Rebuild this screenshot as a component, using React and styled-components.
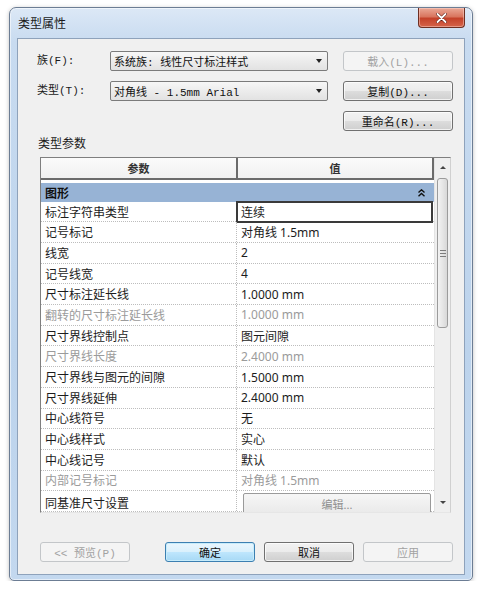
import React from 'react';
import styled, { createGlobalStyle, css } from 'styled-components';

const GlobalStyle = createGlobalStyle`
  html, body { margin: 0; padding: 0; background: #ffffff; }
  body { font-family: "Noto Sans", "Noto Sans CJK SC", sans-serif; }
  * { box-sizing: border-box; }
`;

const simFont = `"Liberation Mono", "Noto Sans CJK SC", monospace`;
const uiFont = `"Noto Sans", "Noto Sans CJK SC", sans-serif`;

const Page = styled.div`
  padding: 7px 0 0 9px;
`;

const Window = styled.div`
  width: 464px;
  height: 574px;
  border: 1px solid #6c7d94;
  border-radius: 7px 7px 5px 5px;
  background: linear-gradient(180deg, #dce8f6 0px, #c8dbf0 34px, #bcd3ec 60%, #c3d8ef 100%);
  box-shadow: inset 0 0 0 1px rgba(255, 255, 255, 0.55), 0 1px 4px rgba(0, 0, 0, 0.25);
  padding: 0 7px 5px 7px;
  display: flex;
  flex-direction: column;
`;

const TitleBar = styled.div`
  height: 30px;
  display: flex;
  align-items: flex-start;
  justify-content: space-between;
`;

const Title = styled.div`
  font-family: "Noto Sans CJK SC", sans-serif;
  font-size: 12px;
  color: #1a1a1a;
  line-height: 30px;
  height: 30px;
  padding-left: 1px;
`;

const CloseButton = styled.div`
  width: 47px;
  height: 20px;
  border: 1px solid #6e2f22;
  border-top: none;
  border-radius: 0 0 4px 4px;
  background: linear-gradient(180deg, #eaa896 0%, #d9765f 45%, #c4422a 55%, #d5644a 100%);
  box-shadow: inset 0 0 0 1px rgba(255, 220, 210, 0.45);
  display: flex;
  align-items: center;
  justify-content: center;
`;

const Client = styled.div`
  flex: 1;
  border: 1px solid #8ea2bb;
  background: #f0f0f0;
  display: flex;
  flex-direction: column;
  padding: 12px 11px 0 0;
`;

const TopGrid = styled.div`
  display: grid;
  grid-template-columns: 73px 218px 1fr;
  row-gap: 10px;
  grid-auto-rows: 20px;
  padding-left: 19px;
`;

const FieldLabel = styled.div`
  font-family: ${simFont};
  font-size: 11px;
  color: #1a1a1a;
  line-height: 20px;
`;

const Combo = styled.div`
  border: 1px solid #7b7b7b;
  border-radius: 2px;
  background: linear-gradient(180deg, #f7f7f7 0%, #ececec 50%, #e2e2e2 100%);
  display: flex;
  align-items: center;
  justify-content: space-between;
  padding: 0 5px 0 3px;
  font-family: ${simFont};
  font-size: 11px;
  color: #111;
`;

const ComboArrow = styled.span`
  width: 0;
  height: 0;
  border-left: 3px solid transparent;
  border-right: 3px solid transparent;
  border-top: 4px solid #222;
`;

const buttonBase = css`
  height: 20px;
  border-radius: 3px;
  font-family: ${simFont};
  font-size: 11px;
  display: flex;
  align-items: center;
  justify-content: center;
`;

const DialogButton = styled.div`
  ${buttonBase};
  width: ${(p) => (p.$wide ? '110px' : '90px')};
  ${(p) =>
    p.$disabled
      ? css`
          border: 1px solid #c3c6c9;
          background: #f4f4f4;
          color: #a2a2a2;
        `
      : p.$default
      ? css`
          border: 1px solid #3c7fb1;
          background: linear-gradient(180deg, #eaf6fd 0%, #d9f0fc 50%, #bee6fd 51%, #a7d9f5 100%);
          box-shadow: inset 0 0 0 1px #c7ecfb;
          color: #111;
        `
      : css`
          border: 1px solid #707070;
          background: linear-gradient(180deg, #f2f2f2 0%, #ebebeb 50%, #dddddd 51%, #cfcfcf 100%);
          box-shadow: inset 0 0 0 1px rgba(255, 255, 255, 0.7);
          color: #111;
        `}
  ${(p) => p.$wide && `justify-self: end;`}
  ${(p) => p.$col && `grid-column: ${p.$col};`}
`;

const SectionLabel = styled.div`
  font-family: "Noto Sans CJK SC", sans-serif;
  font-size: 12px;
  color: #1a1a1a;
  line-height: 14px;
  margin: 5px 0 0 20px;
`;

const PropertyTable = styled.div`
  margin: 7px 0 0 22px;
  width: 411px;
  height: 356px;
  border: 1px solid #7f7f7f;
  border-right-color: #d0d0d0;
  border-bottom-color: #e6e6e6;
  background: #ffffff;
  display: grid;
  grid-template-columns: 393px 16px;
  overflow: hidden;
`;

const TableBody = styled.div`
  display: flex;
  flex-direction: column;
  overflow: hidden;
`;

const HeaderRow = styled.div`
  display: grid;
  grid-template-columns: 195px 1fr;
  height: 25px;
  background: linear-gradient(180deg, #fbfbfb 0%, #f1f1f1 100%);
  border-bottom: 2px solid #6b6b6b;
  border-right: 2px solid #6b6b6b;
`;

const HeaderCell = styled.div`
  display: flex;
  align-items: center;
  justify-content: center;
  font-family: ${uiFont};
  font-size: 11px;
  font-weight: 700;
  color: #333;
  ${(p) => p.$divider && `border-left: 2px solid #6b6b6b;`}
`;

const Spacer = styled.div`
  height: 4px;
  background: #ffffff;
`;

const GroupRow = styled.div`
  height: 21px;
  background: #97b3d5;
  display: flex;
  align-items: center;
  justify-content: space-between;
  padding: 0 9px 0 4px;
  font-family: ${uiFont};
  font-size: 12px;
  font-weight: 700;
  color: #111;
`;

const PropRow = styled.div`
  display: grid;
  grid-template-columns: 195px 1fr;
  height: 20.7px;
  flex-shrink: 0;
  border-bottom: 1px dotted #bdbdbd;
`;

const PropCell = styled.div`
  display: flex;
  align-items: center;
  padding-left: 4px;
  font-family: ${uiFont};
  font-size: 12px;
  white-space: nowrap;
  color: ${(p) => (p.$muted ? '#9b9b9b' : '#1c1c1c')};
  ${(p) => p.$value && `border-left: 1px dotted #bdbdbd;`}
  ${(p) =>
    p.$selected &&
    css`
      border: 2px solid #3a3a3a;
      margin: -1px 1px -1px 0;
      padding-left: 3px;
    `}
`;

const EditButton = styled.div`
  flex: 1;
  margin: 2px 3px 0 2px;
  height: 22px;
  border: 1px solid #9a9a9a;
  border-radius: 2px;
  background: linear-gradient(180deg, #f6f6f6 0%, #e9e9e9 100%);
  display: flex;
  align-items: center;
  justify-content: center;
  font-family: ${uiFont};
  font-size: 11px;
  color: #8f8f8f;
`;

const ScrollBar = styled.div`
  display: flex;
  flex-direction: column;
  background: #efefef;
  border-left: 1px solid #e4e4e4;
`;

const ScrollArrow = styled.div`
  height: 19px;
  display: flex;
  align-items: center;
  justify-content: center;
  flex-shrink: 0;
`;

const ArrowGlyph = styled.span`
  width: 0;
  height: 0;
  border-left: 3px solid transparent;
  border-right: 3px solid transparent;
  ${(p) => (p.$up ? 'border-bottom: 3px solid #444;' : 'border-top: 3px solid #444;')}
`;

const Thumb = styled.div`
  margin: 1px 2px 0 2px;
  height: 150px;
  flex-shrink: 0;
  border: 1px solid #9b9b9b;
  border-radius: 3px;
  background: linear-gradient(90deg, #f3f3f3 0%, #e6e6e6 50%, #d8d8d8 100%);
  display: flex;
  flex-direction: column;
  align-items: center;
  justify-content: center;
  gap: 2px;
`;

const Grip = styled.span`
  width: 6px;
  height: 1px;
  background: #7d7d7d;
`;

const Track = styled.div`
  flex: 1;
`;

const ButtonBar = styled.div`
  margin: 29px 0 0 22px;
  display: flex;
  justify-content: space-between;
`;

const ButtonGroup = styled.div`
  display: flex;
  gap: 9px;
`;

const CollapseIcon = () => (
  <svg width="7" height="8" viewBox="0 0 7 8">
    <path d="M0.5 3.5 L3.5 0.8 L6.5 3.5 M0.5 7.2 L3.5 4.5 L6.5 7.2" fill="none" stroke="#111" strokeWidth="1.4" />
  </svg>
);

const CloseGlyph = () => (
  <svg width="11" height="10" viewBox="0 0 11 10">
    <path d="M1.5 1 L9.5 9 M9.5 1 L1.5 9" stroke="#5a1a10" strokeWidth="3" strokeLinecap="round" />
    <path d="M1.5 1 L9.5 9 M9.5 1 L1.5 9" stroke="#ffffff" strokeWidth="1.8" strokeLinecap="round" />
  </svg>
);

const rows = [
  { p: '标注字符串类型', v: '连续', selected: true },
  { p: '记号标记', v: '对角线 1.5mm' },
  { p: '线宽', v: '2' },
  { p: '记号线宽', v: '4' },
  { p: '尺寸标注延长线', v: '1.0000 mm' },
  { p: '翻转的尺寸标注延长线', v: '1.0000 mm', muted: true },
  { p: '尺寸界线控制点', v: '图元间隙' },
  { p: '尺寸界线长度', v: '2.4000 mm', muted: true },
  { p: '尺寸界线与图元的间隙', v: '1.5000 mm' },
  { p: '尺寸界线延伸', v: '2.4000 mm' },
  { p: '中心线符号', v: '无' },
  { p: '中心线样式', v: '实心' },
  { p: '中心线记号', v: '默认' },
  { p: '内部记号标记', v: '对角线 1.5mm', muted: true },
  { p: '同基准尺寸设置', edit: true },
];

export default function App() {
  return (
    <>
      <GlobalStyle />
      <Page>
        <Window>
          <TitleBar>
            <Title>类型属性</Title>
            <CloseButton>
              <CloseGlyph />
            </CloseButton>
          </TitleBar>
          <Client>
            <TopGrid>
              <FieldLabel>族(F):</FieldLabel>
              <Combo>
                <span>系统族: 线性尺寸标注样式</span>
                <ComboArrow />
              </Combo>
              <DialogButton $wide $disabled>载入(L)...</DialogButton>

              <FieldLabel>类型(T):</FieldLabel>
              <Combo>
                <span>对角线 - 1.5mm Arial</span>
                <ComboArrow />
              </Combo>
              <DialogButton $wide>复制(D)...</DialogButton>

              <DialogButton $wide $col={3}>重命名(R)...</DialogButton>
            </TopGrid>

            <SectionLabel>类型参数</SectionLabel>

            <PropertyTable>
              <TableBody>
                <HeaderRow>
                  <HeaderCell>参数</HeaderCell>
                  <HeaderCell $divider>值</HeaderCell>
                </HeaderRow>
                <Spacer />
                <GroupRow>
                  <span>图形</span>
                  <CollapseIcon />
                </GroupRow>
                {rows.map((r) => (
                  <PropRow key={r.p}>
                    <PropCell $muted={r.muted}>{r.p}</PropCell>
                    {r.edit ? (
                      <PropCell $value>
                        <EditButton>编辑...</EditButton>
                      </PropCell>
                    ) : (
                      <PropCell $value $muted={r.muted} $selected={r.selected}>
                        {r.v}
                      </PropCell>
                    )}
                  </PropRow>
                ))}
              </TableBody>
              <ScrollBar>
                <ScrollArrow>
                  <ArrowGlyph $up />
                </ScrollArrow>
                <Thumb>
                  <Grip />
                  <Grip />
                  <Grip />
                </Thumb>
                <Track />
                <ScrollArrow>
                  <ArrowGlyph />
                </ScrollArrow>
              </ScrollBar>
            </PropertyTable>

            <ButtonBar>
              <DialogButton $disabled>&lt;&lt; 预览(P)</DialogButton>
              <ButtonGroup>
                <DialogButton $default>确定</DialogButton>
                <DialogButton>取消</DialogButton>
                <DialogButton $disabled>应用</DialogButton>
              </ButtonGroup>
            </ButtonBar>
          </Client>
        </Window>
      </Page>
    </>
  );
}
